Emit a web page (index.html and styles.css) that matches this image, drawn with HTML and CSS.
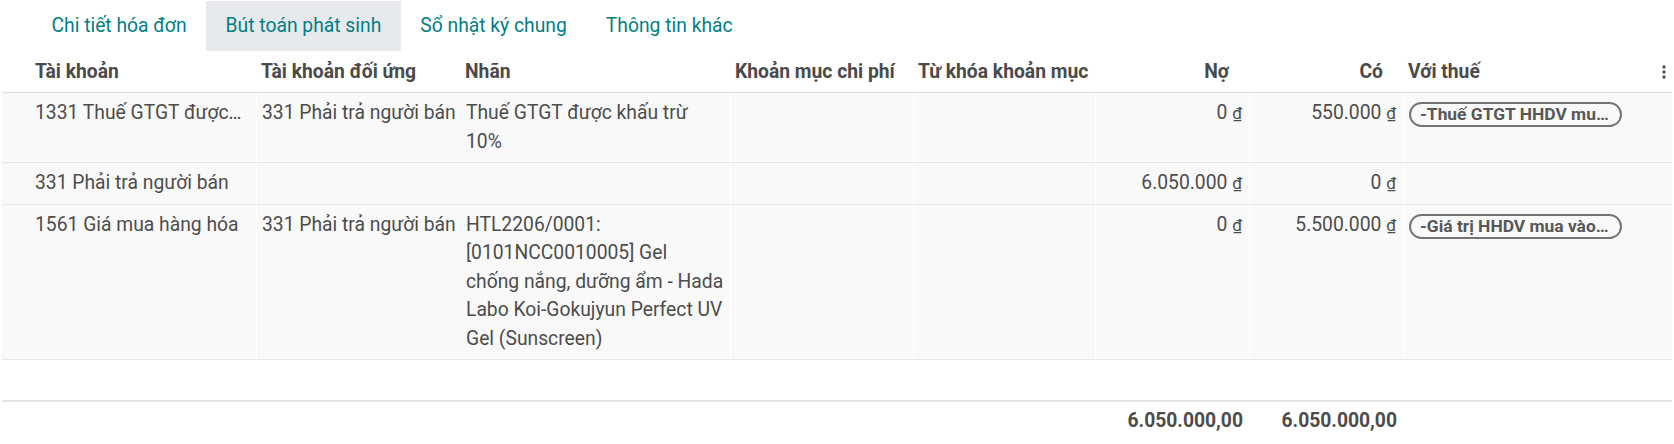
FILE: index.html
```html
<!DOCTYPE html>
<html lang="vi">
<head>
  <meta charset="UTF-8">
  <meta name="viewport" content="width=device-width, initial-scale=1.0">
  <title>Bút toán phát sinh</title>
  <link rel="stylesheet" href="styles.css">
</head>
<body>
  <div class="sheet">
    <ul class="tabs">
      <li class="tab">Chi tiết hóa đơn</li>
      <li class="tab active">Bút toán phát sinh</li>
      <li class="tab">Sổ nhật ký chung</li>
      <li class="tab">Thông tin khác</li>
    </ul>

    <table class="lines">
      <colgroup>
        <col class="w-account">
        <col class="w-counter">
        <col class="w-label">
        <col class="w-item">
        <col class="w-keyword">
        <col class="w-money">
        <col class="w-money">
        <col class="w-tax">
      </colgroup>
      <thead>
        <tr>
          <th class="first">Tài khoản</th>
          <th>Tài khoản đối ứng</th>
          <th class="label">Nhãn</th>
          <th class="item">Khoản mục chi phí</th>
          <th>Từ khóa khoản mục</th>
          <th class="num">Nợ</th>
          <th class="num">Có</th>
          <th>
            <span class="opts">
              <svg width="4" height="14" viewBox="0 0 4 14"><circle cx="2" cy="2" r="1.7"/><circle cx="2" cy="7" r="1.7"/><circle cx="2" cy="12" r="1.7"/></svg>
            </span>
            Với thuế
          </th>
        </tr>
      </thead>
      <tbody>
        <tr>
          <td class="first"><div class="cut">1331 Thuế GTGT được khấu trừ của hàng hóa, dịch vụ</div></td>
          <td class="partner">331 Phải trả người bán</td>
          <td class="label">Thuế GTGT được khấu trừ<br>10%</td>
          <td></td>
          <td></td>
          <td class="num">0 <span class="cur">₫</span></td>
          <td class="num">550.000 <span class="cur">₫</span></td>
          <td><span class="pill">-Thuế GTGT HHDV mua vào</span></td>
        </tr>
        <tr>
          <td class="first">331 Phải trả người bán</td>
          <td class="partner"></td>
          <td class="label"></td>
          <td></td>
          <td></td>
          <td class="num">6.050.000 <span class="cur">₫</span></td>
          <td class="num">0 <span class="cur">₫</span></td>
          <td></td>
        </tr>
        <tr>
          <td class="first">1561 Giá mua hàng hóa</td>
          <td class="partner">331 Phải trả người bán</td>
          <td class="label">HTL2206/0001:<br>[0101NCC0010005] Gel<br>chống nắng, dưỡng ẩm - Hada<br>Labo Koi-Gokujyun Perfect UV<br>Gel (Sunscreen)</td>
          <td></td>
          <td></td>
          <td class="num">0 <span class="cur">₫</span></td>
          <td class="num">5.500.000 <span class="cur">₫</span></td>
          <td><span class="pill">-Giá trị HHDV mua vào chịu thuế</span></td>
        </tr>
        <tr class="filler">
          <td colspan="8"></td>
        </tr>
      </tbody>
      <tfoot>
        <tr>
          <td colspan="5"></td>
          <td class="num">6.050.000,00</td>
          <td class="num">6.050.000,00</td>
          <td></td>
        </tr>
      </tfoot>
    </table>
  </div>
</body>
</html>
```

FILE: styles.css
```css
body {
  margin: 0;
  background: #fff;
  font-family: Roboto, "Noto Sans", sans-serif;
  font-size: 19.3px;
  color: #4c4c4c;
}
.sheet {
  padding: 0 2px;
}

/* tabs */
.tabs {
  display: flex;
  list-style: none;
  margin: 0;
  padding: 1px 0 0 30px;
}
.tab {
  padding: 11px 19.5px;
  line-height: 28px;
  color: #017e84;
}
.tab.active {
  background: #e7e9ed;
}

/* lines table */
.lines {
  width: 1670px;
  table-layout: fixed;
  border-collapse: separate;
  border-spacing: 0;
}
.w-account { width: 254px; }
.w-counter { width: 204px; }
.w-label { width: 270px; }
.w-item { width: 183px; }
.w-keyword { width: 182px; }
.w-money { width: 154px; }
.w-tax { width: 269px; }

.lines th {
  text-align: left;
  font-weight: 700;
  line-height: 28px;
  padding: 6.5px 5px;
  border-bottom: 1px solid #dcdfe3;
  box-shadow: 0 1px 1px rgba(0, 0, 0, 0.03);
  white-space: nowrap;
  overflow: hidden;
  text-overflow: ellipsis;
  color: #4a4a4a;
}
.lines th.num {
  text-align: right;
  padding-right: 20px;
}
.lines th.item {
  padding-right: 18px;
}
.lines th:last-child {
  padding-right: 6px;
}
.lines .first {
  padding-left: 33px;
}

.lines td {
  vertical-align: top;
  line-height: 28.5px;
  padding: 6px 5px;
  background: #f9f9f9;
  border-bottom: 1px solid #e4e6e9;
  border-left: 1px solid #fff;
}
.lines td.first {
  border-left: none;
  padding-right: 12px;
}
.lines td.partner {
  white-space: nowrap;
  padding-right: 0;
}
.lines td.label {
  border-left-color: transparent;
  white-space: nowrap;
}
.lines td.num {
  text-align: right;
  padding-right: 7px;
  white-space: nowrap;
}
.cut {
  white-space: nowrap;
  overflow: hidden;
  text-overflow: ellipsis;
}
.cur {
  font-size: 17px;
}

.pill {
  display: inline-block;
  box-sizing: border-box;
  max-width: 213px;
  vertical-align: top;
  margin-top: 3px;
  padding: 0 9px;
  border: 2px solid #737373;
  border-radius: 13px;
  font-size: 17.4px;
  font-weight: 700;
  line-height: 21px;
  color: #575757;
  white-space: nowrap;
  overflow: hidden;
  text-overflow: ellipsis;
}

.opts {
  float: right;
  fill: #555;
  line-height: 28px;
}
.opts svg {
  vertical-align: middle;
}

.lines tr.filler td {
  background: #fff;
  border: none;
  height: 27.5px;
}

.lines tfoot td {
  background: #fff;
  border-left: none;
  border-bottom: none;
  border-top: 2px solid #e2e5e9;
  font-weight: 700;
  padding-top: 5px;
}
.lines tfoot td.num {
  padding-right: 6px;
}
```
